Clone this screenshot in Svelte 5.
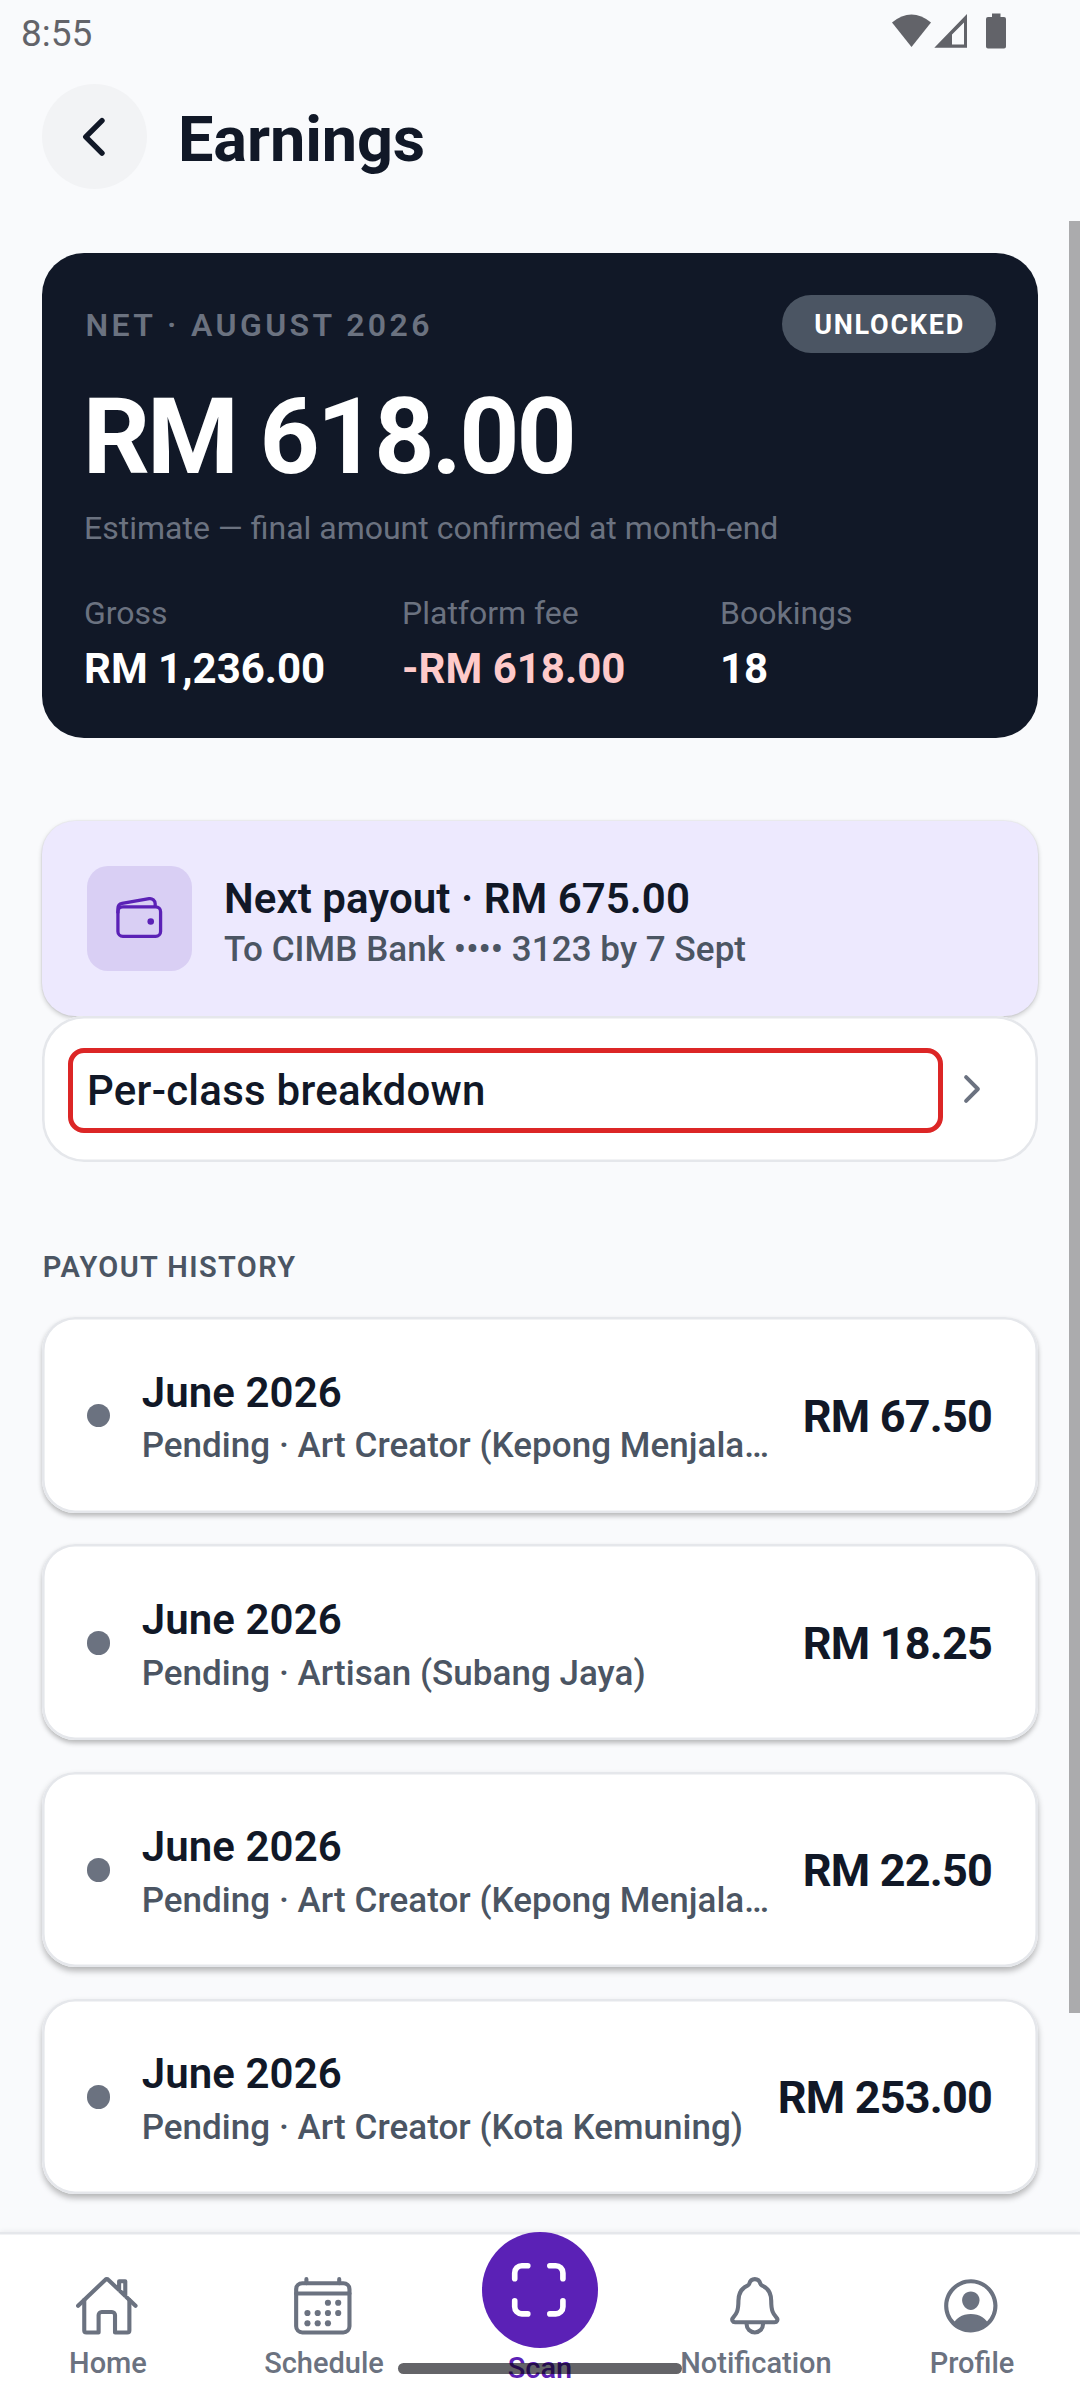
<script lang="ts">
  interface Payout {
    month: string;
    detail: string;
    amount: string;
  }

  const totals = [
    { label: 'Gross', value: 'RM 1,236.00' },
    { label: 'Platform fee', value: '-RM 618.00', negative: true },
    { label: 'Bookings', value: '18' }
  ];

  const payouts: Payout[] = [
    { month: 'June 2026', detail: 'Pending · Art Creator (Kepong Menjalara)', amount: 'RM 67.50' },
    { month: 'June 2026', detail: 'Pending · Artisan (Subang Jaya)', amount: 'RM 18.25' },
    { month: 'June 2026', detail: 'Pending · Art Creator (Kepong Menjalara)', amount: 'RM 22.50' },
    { month: 'June 2026', detail: 'Pending · Art Creator (Kota Kemuning)', amount: 'RM 253.00' }
  ];

  const tabs = [
    { id: 'home', label: 'Home' },
    { id: 'schedule', label: 'Schedule' },
    { id: 'scan', label: 'Scan' },
    { id: 'notification', label: 'Notification' },
    { id: 'profile', label: 'Profile' }
  ];

  // calendar day dots, in icon units
  const days = [
    [296, 232], [376, 232],
    [136, 312], [216, 312], [296, 312], [376, 312],
    [136, 392], [216, 392], [296, 392]
  ];
</script>

{#snippet tabIcon(id: string)}
  <svg class="tab-icon" viewBox="0 0 512 512">
    {#if id === 'home'}
      <path class="line" d="M80 212v236a16 16 0 0016 16h96V328a24 24 0 0124-24h80a24 24 0 0124 24v136h96a16 16 0 0016-16V212" />
      <path class="line" d="M480 256L266.89 52c-5-5.28-16.69-5.34-21.78 0L32 256M400 179V64h-48v69" />
    {:else if id === 'schedule'}
      <rect class="line" x="48" y="80" width="416" height="384" rx="48" />
      {#each days as [cx, cy]}
        <circle {cx} {cy} r="24" />
      {/each}
      <path class="line" d="M128 48v32M384 48v32M464 160H48" />
    {:else if id === 'scan'}
      <path class="line thick" d="M342 444h46a56 56 0 0056-56v-46M444 170v-46a56 56 0 00-56-56h-46M170 444h-46a56 56 0 01-56-56v-46M68 170v-46a56 56 0 0156-56h46" />
    {:else if id === 'notification'}
      <path class="line" d="M427.68 351.43C402 320 383.87 304 383.87 217.35 383.87 138 343.35 109.73 310 96c-4.43-1.82-8.6-6-9.95-10.55C294.2 65.54 277.8 48 256 48s-38.21 17.55-44 37.47c-1.35 4.6-5.52 8.71-9.95 10.53-33.39 13.75-73.87 41.92-73.87 121.35C128.13 304 110 320 84.32 351.43 73.68 364.45 83 384 101.61 384h308.88c18.51 0 27.77-19.61 17.19-32.57zM320 384v16a64 64 0 01-128 0v-16" />
    {:else}
      <path fill-rule="evenodd" d="M258.9 48C141.92 46.42 46.42 141.92 48 258.9c1.56 112.19 92.91 203.54 205.1 205.1 117 1.6 212.48-93.9 210.88-210.88C462.44 140.91 371.09 49.56 258.9 48zM385.32 375.25a4 4 0 01-6.14-.32 124.27 124.27 0 00-32.35-29.59C321.37 329 289.11 320 256 320s-65.37 9-90.83 25.34a124.24 124.24 0 00-32.35 29.58 4 4 0 01-6.14.32A175.32 175.32 0 0180 259c-1.63-97.31 78.22-178.76 175.57-179S432 158.81 432 256a175.32 175.32 0 01-46.68 119.25z" />
      <path d="M256 144c-19.72 0-37.55 7.39-50.22 20.82s-19 32-17.57 51.93C191.11 256 221.52 288 256 288s64.83-32 67.79-71.24c1.48-19.74-4.8-38.14-17.68-51.82C293.39 151.44 275.59 144 256 144z" />
    {/if}
  </svg>
{/snippet}

<div class="screen">
  <div class="status-bar">
    <span class="clock">8:55</span>
    <svg class="status-icons" width="116" height="36" viewBox="0 0 116 36">
      <path d="M0 9.5Q19.5 -6.5 39 9.5L19.5 34z" />
      <path fill-rule="evenodd" d="M75 1V34.8H42.3zM72 9.5L60 21.5V31.6H72z" />
      <path d="M100 .5h8.5V4h3.5a2 2 0 012 2v27.5a2 2 0 01-2 2H96a2 2 0 01-2-2V6a2 2 0 012-2h4z" />
    </svg>
  </div>

  <header>
    <button class="back" aria-label="Back">
      <svg viewBox="0 0 512 512"><path d="M328 112L184 256l144 144" /></svg>
    </button>
    <h1>Earnings</h1>
  </header>

  <main>
    <section class="summary">
      <div class="summary-head">
        <span class="period">NET · AUGUST 2026</span>
        <span class="badge">UNLOCKED</span>
      </div>
      <div class="net">RM 618.00</div>
      <div class="note">Estimate — final amount confirmed at month-end</div>
      <div class="totals">
        {#each totals as total}
          <div class="total">
            <div class="total-label">{total.label}</div>
            <div class="total-value" class:negative={total.negative}>{total.value}</div>
          </div>
        {/each}
      </div>
    </section>

    <section class="next-payout">
      <div class="wallet">
        <svg viewBox="0 0 512 512">
          <rect x="48" y="144" width="416" height="288" rx="48" />
          <path d="M411.36 144v-30A50 50 0 00352 64.9L88.64 109.85A50 50 0 0048 159v49" />
          <circle cx="368" cy="288" r="32" />
        </svg>
      </div>
      <div>
        <div class="next-title">Next payout · RM 675.00</div>
        <div class="next-sub">To CIMB Bank •••• 3123 by 7 Sept</div>
      </div>
    </section>

    <button class="breakdown">
      <span>Per-class breakdown</span>
      <svg viewBox="0 0 512 512"><path d="M184 112l144 144-144 144" /></svg>
    </button>

    <h2>PAYOUT HISTORY</h2>

    <div class="history">
      {#each payouts as payout}
        <article class="payout">
          <span class="dot"></span>
          <div class="payout-text">
            <div class="month">{payout.month}</div>
            <div class="detail">{payout.detail}</div>
          </div>
          <div class="amount">{payout.amount}</div>
        </article>
      {/each}
    </div>

    <div class="scrollbar"></div>
  </main>

  <nav>
    {#each tabs as tab}
      <div class="tab" class:scan={tab.id === 'scan'}>
        <div class="tab-mark">{@render tabIcon(tab.id)}</div>
        <span>{tab.label}</span>
      </div>
    {/each}
  </nav>

  <div class="gesture-bar"></div>
</div>

<style>
  :global(body) {
    background: #f9fafc;
  }

  .screen {
    position: relative;
    display: flex;
    flex-direction: column;
    width: 1080px;
    height: 2400px;
    overflow: hidden;
    background: #f9fafc;
    color: #111827;
    font-family: Roboto, 'Liberation Sans', sans-serif;
  }

  button {
    border: none;
    padding: 0;
    color: inherit;
    font-family: inherit;
  }

  /* Status bar */
  .status-bar {
    display: flex;
    justify-content: space-between;
    align-items: flex-start;
    height: 84px;
    box-sizing: border-box;
    padding: 12px 72px 0 21px;
  }

  .clock {
    font-size: 37px;
    line-height: 43px;
    color: #626369;
  }

  .status-icons {
    fill: #626369;
    margin-top: 1px;
  }

  /* Header */
  header {
    display: flex;
    align-items: flex-start;
    gap: 31px;
    height: 137px;
    padding: 0 42px;
  }

  .back {
    display: flex;
    align-items: center;
    justify-content: center;
    width: 105px;
    height: 105px;
    border-radius: 50%;
    background: #f2f3f5;
  }

  .back svg {
    width: 57.75px;
    height: 57.75px;
    margin-right: 1px;
    fill: none;
    stroke: #111827;
    stroke-width: 48;
    stroke-linecap: round;
    stroke-linejoin: round;
  }

  h1 {
    margin: 3px 0 0;
    font-size: 63px;
    line-height: 105px;
    font-weight: 700;
    letter-spacing: -0.1px;
  }

  main {
    position: relative;
    flex: 1;
    min-height: 0;
    overflow: hidden;
    padding: 32px 42px 0;
  }

  .scrollbar {
    position: absolute;
    top: 0;
    right: 0;
    width: 11px;
    height: 1792px;
    background: #ababad;
  }

  /* Monthly summary */
  .summary {
    height: 485px;
    box-sizing: border-box;
    padding: 42px;
    border-radius: 42px;
    background: #111827;
    color: #fff;
  }

  .summary-head {
    display: flex;
    justify-content: space-between;
    align-items: center;
    height: 58px;
  }

  .period {
    padding: 1px 0 0 1.5px;
    font-size: 32px;
    font-weight: 600;
    letter-spacing: 3.4px;
    color: #6b7280;
  }

  .badge {
    padding: 0 31px 0 32px;
    border-radius: 29px;
    background: #4b5563;
    font-size: 27px;
    line-height: 60px;
    height: 58px;
    font-weight: 700;
    letter-spacing: 1.75px;
  }

  .net {
    margin: 22px 0 0 -1.3px;
    font-size: 105px;
    line-height: 126px;
    font-weight: 700;
    letter-spacing: -2.85px;
  }

  .note {
    margin-top: 9px;
    font-size: 32px;
    line-height: 37px;
    color: #6b7280;
  }

  .totals {
    display: flex;
    gap: 42px;
    margin-top: 48px;
  }

  .total {
    flex: 1;
  }

  .total-label {
    font-size: 32px;
    line-height: 37px;
    color: #6b7280;
  }

  .total-value {
    margin-top: 12px;
    font-size: 42px;
    line-height: 49px;
    font-weight: 700;
    white-space: nowrap;
  }

  .negative {
    color: #fecaca;
  }

  /* Next payout */
  .next-payout {
    display: flex;
    align-items: center;
    gap: 32px;
    margin-top: 83px;
    height: 195px;
    box-sizing: border-box;
    padding: 0 45px;
    border-radius: 33px;
    background: #ede9fe;
    box-shadow: 0 0 0 1px rgba(0, 0, 0, 0.03), 0 2px 5px rgba(0, 0, 0, 0.2);
  }

  .wallet {
    display: flex;
    align-items: center;
    justify-content: center;
    width: 105px;
    height: 105px;
    border-radius: 21px;
    background: #d9cff4;
  }

  .wallet svg {
    width: 52.5px;
    height: 52.5px;
    fill: none;
    stroke: #5b21b6;
    stroke-width: 32;
    stroke-linejoin: round;
  }

  .wallet circle {
    fill: #5b21b6;
    stroke: none;
  }

  .next-title {
    font-size: 42px;
    line-height: 61px;
    font-weight: 600;
    letter-spacing: 0.05px;
  }

  .next-sub {
    font-size: 35px;
    line-height: 41px;
    font-weight: 500;
    letter-spacing: 0.06px;
    color: #4b5563;
  }

  /* Breakdown link */
  .breakdown {
    position: relative;
    display: flex;
    align-items: center;
    justify-content: space-between;
    width: 996px;
    height: 145.6px;
    padding: 0 45px;
    border-radius: 42px;
    background: #fff;
    box-shadow: inset 0 0 0 2.6px #e5e7eb;
    font-size: 42px;
    font-weight: 500;
    letter-spacing: 0.25px;
  }

  .breakdown span {
    padding-top: 3px;
  }

  .breakdown::after {
    content: '';
    position: absolute;
    left: 26px;
    top: 32px;
    width: 865px;
    height: 75px;
    border: 5px solid #dc2626;
    border-radius: 16px;
  }

  .breakdown svg {
    width: 42px;
    height: 42px;
    fill: none;
    stroke: #6b7280;
    stroke-width: 48;
    stroke-linecap: round;
    stroke-linejoin: round;
  }

  /* Payout history */
  h2 {
    margin: 88.1px 0 0 0.7px;
    font-size: 29px;
    line-height: 34px;
    font-weight: 600;
    letter-spacing: 1.4px;
    color: #4b5563;
  }

  .history {
    display: flex;
    flex-direction: column;
    gap: 31.5px;
    margin-top: 33.5px;
  }

  .payout {
    display: flex;
    align-items: center;
    gap: 31.5px;
    height: 195.7px;
    box-sizing: border-box;
    padding: 0 45px 0 44.6px;
    border-radius: 33px;
    background: #fff;
    box-shadow: inset 0 0 0 2.6px #e5e7eb, 0 3px 5px rgba(0, 0, 0, 0.27);
  }

  .payout:nth-child(n + 3) {
    box-shadow: inset 0 0 0 2.6px #e5e7eb, 0 4px 6px rgba(0, 0, 0, 0.28);
  }

  .dot {
    flex: none;
    width: 23.6px;
    height: 23.6px;
    margin-top: 1px;
    border-radius: 50%;
    background: #6b7280;
  }

  .payout-text {
    flex: 1;
    min-width: 0;
  }

  .month {
    font-size: 42px;
    line-height: 60px;
    font-weight: 600;
    letter-spacing: 0.1px;
  }

  .detail {
    margin-top: 2.6px;
    font-size: 35px;
    line-height: 42px;
    font-weight: 500;
    letter-spacing: 0.03px;
    color: #4b5563;
    white-space: nowrap;
    overflow: hidden;
    text-overflow: ellipsis;
  }

  .amount {
    margin-right: 1px;
    padding-top: 2px;
    font-size: 45px;
    font-weight: 700;
    letter-spacing: -0.8px;
  }

  /* Tab bar */
  nav {
    display: flex;
    height: 168px;
    background: #fff;
    box-shadow: inset 0 2.6px 0 #e5e7eb, 0 -1px 5px rgba(0, 0, 0, 0.06);
    position: relative;
  }

  .tab {
    display: flex;
    flex-direction: column;
    align-items: center;
    flex: 1;
    gap: 8px;
    padding-top: 40.5px;
    font-size: 29px;
    line-height: 34px;
    font-weight: 500;
    color: #6b7280;
    white-space: nowrap;
  }

  .tab-mark {
    display: flex;
    align-items: center;
    justify-content: center;
  }

  .tab-icon {
    width: 65.625px;
    height: 65.625px;
    margin-right: 1.6px;
    fill: currentColor;
  }

  .line {
    fill: none;
    stroke: currentColor;
    stroke-width: 32;
    stroke-linecap: round;
    stroke-linejoin: round;
  }

  .thick {
    stroke-width: 44;
  }

  .scan {
    gap: 3px;
    padding-top: 0;
    color: #5b21b6;
  }

  .scan .tab-mark {
    width: 116px;
    height: 116px;
    border-radius: 50%;
    background: #5b21b6;
    color: #fff;
  }

  .gesture-bar {
    position: absolute;
    left: 398px;
    bottom: 26px;
    width: 284px;
    height: 11px;
    border-radius: 6px;
    background: rgba(2, 2, 8, 0.61);
  }
</style>
